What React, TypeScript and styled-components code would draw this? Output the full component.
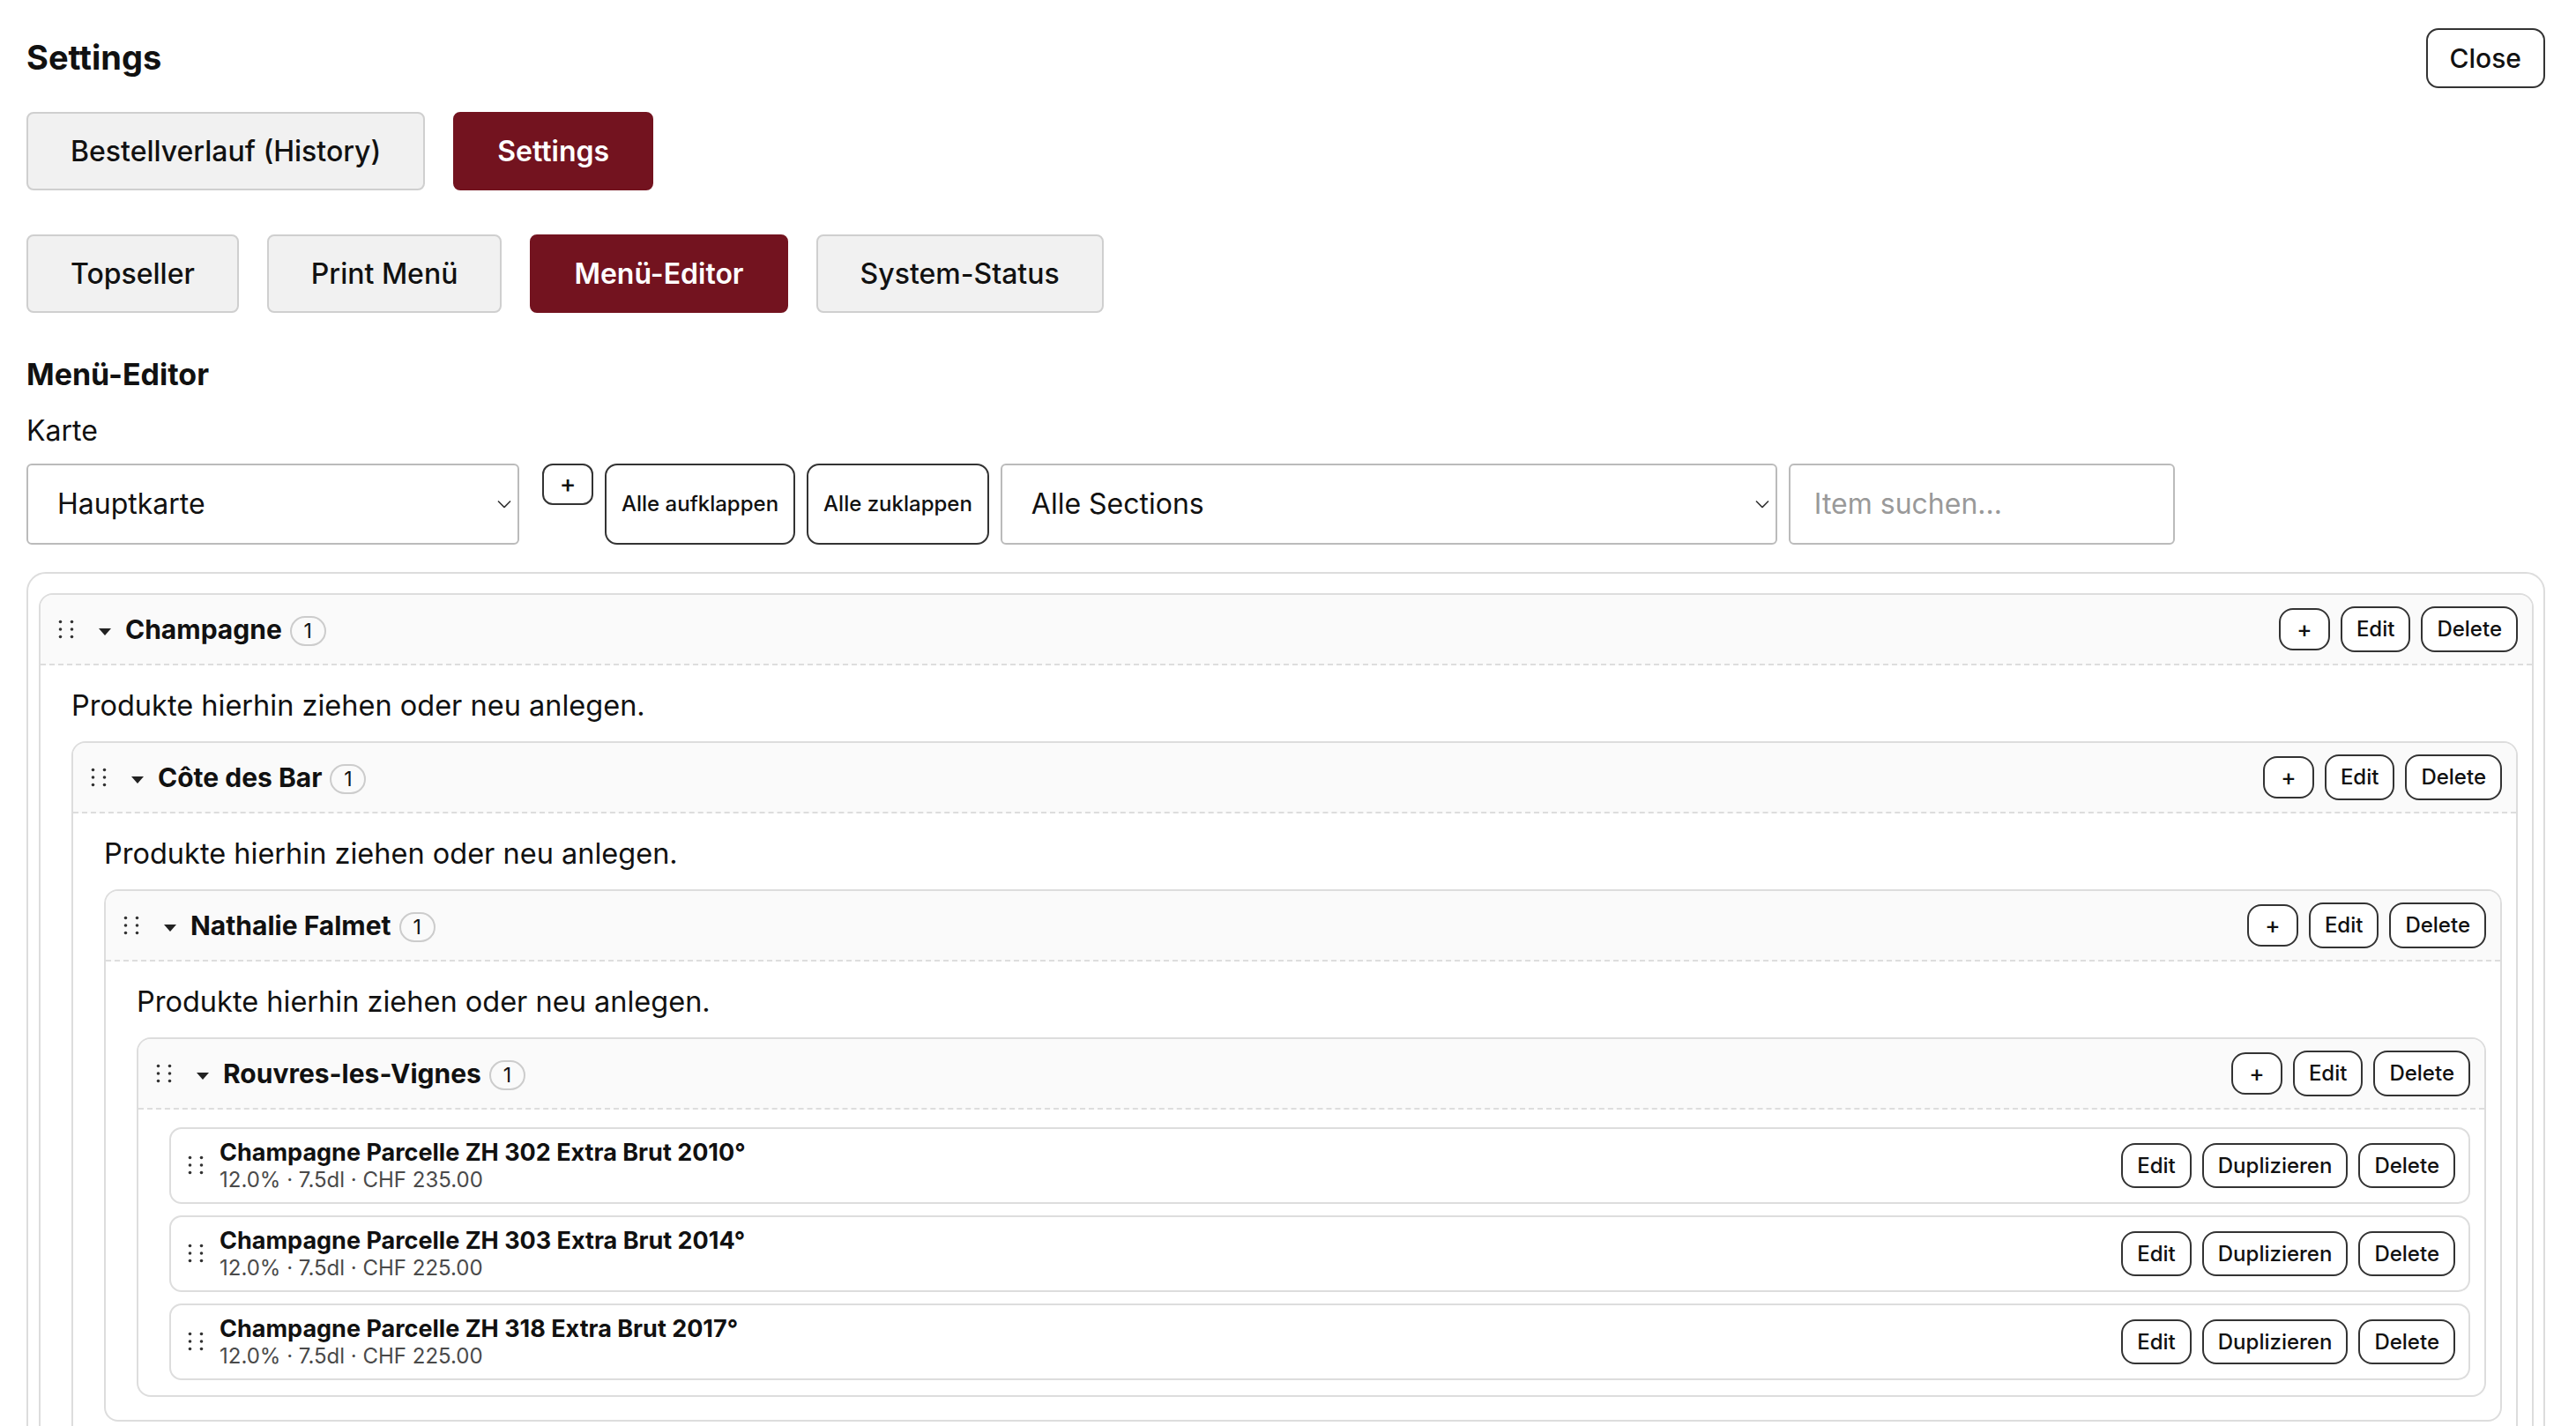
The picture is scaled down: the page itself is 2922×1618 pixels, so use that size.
import styled, { createGlobalStyle } from "styled-components";

type Product = {
  name: string;
  meta: string;
};

type Section = {
  title: string;
  count: number;
  children?: Section[];
  items?: Product[];
};

const GlobalStyle = createGlobalStyle`
  * {
    box-sizing: border-box;
  }
  html,
  body {
    margin: 0;
    padding: 0;
    overflow: hidden;
    background: #fff;
  }
  body {
    font-family: Inter, "Noto Sans", sans-serif;
    color: #111;
  }
  button,
  input,
  select {
    font-family: inherit;
    color: inherit;
  }
`;

const Page = styled.div`
  padding: 32px 35px 0 30px;
`;

const TopBar = styled.header`
  display: flex;
  justify-content: space-between;
  align-items: center;
  height: 68px;
`;

const Title = styled.h1`
  margin: 0;
  font-size: 38px;
  font-weight: 700;
  line-height: 1.2;
`;

const CloseButton = styled.button`
  height: 68px;
  padding: 0 25px;
  border: 2px solid #333;
  border-radius: 14px;
  background: #fff;
  font-size: 30px;
  font-weight: 500;
`;

const TabRow = styled.nav<{ $top: number }>`
  display: flex;
  gap: 32px;
  margin-top: ${(p) => p.$top}px;
`;

const Tab = styled.button<{ $active?: boolean }>`
  height: 89px;
  padding: 0 48px;
  border: 2px solid ${(p) => (p.$active ? "#73131f" : "#cfcfcf")};
  border-radius: 8px;
  background: ${(p) => (p.$active ? "#73131f" : "#f1f1f1")};
  color: ${(p) => (p.$active ? "#fff" : "#111")};
  font-size: 32px;
  font-weight: ${(p) => (p.$active ? 600 : 500)};
`;

const Heading = styled.h2`
  margin: 50px 0 0;
  font-size: 34px;
  font-weight: 700;
  line-height: 1.2;
`;

const FieldLabel = styled.label`
  display: block;
  margin-top: 23px;
  font-size: 32px;
  line-height: 39px;
`;

const Toolbar = styled.div`
  display: flex;
  gap: 13px;
  height: 92px;
  margin-top: 18px;
`;

const SelectWrap = styled.div<{ $width: number }>`
  position: relative;
  flex: none;
  width: ${(p) => p.$width}px;
`;

const Select = styled.select`
  appearance: none;
  width: 100%;
  height: 100%;
  padding: 0 40px 0 33px;
  border: 2px solid #bbb;
  border-radius: 6px;
  background: #fff;
  font-size: 32px;
`;

const SelectArrow = styled.svg`
  position: absolute;
  top: 50%;
  right: 9px;
  transform: translateY(-50%);
  pointer-events: none;
`;

const SmallAdd = styled.button`
  align-self: flex-start;
  width: 58px;
  height: 47px;
  margin-left: 13px;
  border: 2px solid #333;
  border-radius: 12px;
  background: #fff;
  font-size: 28px;
  font-weight: 500;
`;

const ToolButton = styled.button`
  padding: 0 17px;
  border: 2px solid #333;
  border-radius: 14px;
  background: #fff;
  font-size: 24px;
  font-weight: 500;
`;

const SearchInput = styled.input`
  width: 438px;
  padding: 0 27px;
  border: 2px solid #bbb;
  border-radius: 6px;
  font-size: 32px;

  &::placeholder {
    color: #999;
  }
`;

const ListPanel = styled.div`
  margin-top: 31px;
  padding: 22px 11px 22px 12px;
  border: 2px solid #ddd;
  border-radius: 22px;
`;

const SectionBox = styled.section`
  border: 2px solid #ddd;
  border-radius: 16px;
  background: #fff;
  overflow: hidden;
`;

const SectionHeader = styled.div`
  display: flex;
  align-items: center;
  height: 80px;
  padding: 0 16px 0 20px;
  background: #fafafa;
  border-bottom: 2px dashed #ddd;
`;

const Handle = styled.svg<{ $gap: number }>`
  flex: none;
  margin-right: ${(p) => p.$gap}px;
`;

const Caret = styled.svg`
  flex: none;
  margin: 6px 16px 0 0;
`;

const SectionTitle = styled.span`
  font-size: 30px;
  font-weight: 700;
  margin-right: 9px;
`;

const CountBadge = styled.span`
  display: inline-flex;
  align-items: center;
  justify-content: center;
  min-width: 41px;
  height: 34px;
  padding: 0 12px;
  border: 2px solid #ccc;
  border-radius: 17px;
  font-size: 23px;
  margin-top: 4px;
`;

const Actions = styled.div`
  display: flex;
  align-items: center;
  gap: 12px;
  margin-left: auto;
`;

const ActionButton = styled.button<{ $square?: boolean; $height: number }>`
  height: ${(p) => p.$height}px;
  min-width: ${(p) => (p.$square ? "58px" : "0")};
  padding: 0 16px;
  border: 2px solid #333;
  border-radius: 16px;
  background: #fff;
  font-size: ${(p) => (p.$square ? "26px" : "24px")};
  font-weight: 500;
`;

const SectionBody = styled.div<{ $compact?: boolean }>`
  display: flex;
  flex-direction: column;
  gap: ${(p) => (p.$compact ? 13 : 20)}px;
  padding: ${(p) => (p.$compact ? "20px 16px 17px 35px" : "26px 16px 26px 35px")};
`;

const DropHint = styled.p`
  margin: 0;
  font-size: 32.5px;
  line-height: 40px;
`;

const ProductRow = styled.div`
  display: flex;
  align-items: center;
  min-height: 87px;
  padding: 11px 15px 11px 19px;
  border: 2px solid #ddd;
  border-radius: 14px;
  background: #fff;
`;

const ProductInfo = styled.div`
  display: flex;
  flex-direction: column;
`;

const ProductName = styled.span`
  font-size: 27px;
  font-weight: 700;
  line-height: 32px;
`;

const ProductMeta = styled.span`
  font-size: 24px;
  line-height: 29px;
  color: #4a4a4a;
`;

const menu: Section = {
  title: "Champagne",
  count: 1,
  children: [
    {
      title: "Côte des Bar",
      count: 1,
      children: [
        {
          title: "Nathalie Falmet",
          count: 1,
          children: [
            {
              title: "Rouvres-les-Vignes",
              count: 1,
              items: [
                { name: "Champagne Parcelle ZH 302 Extra Brut 2010°", meta: "12.0% · 7.5dl · CHF 235.00" },
                { name: "Champagne Parcelle ZH 303 Extra Brut 2014°", meta: "12.0% · 7.5dl · CHF 225.00" },
                { name: "Champagne Parcelle ZH 318 Extra Brut 2017°", meta: "12.0% · 7.5dl · CHF 225.00" },
              ],
            },
          ],
        },
      ],
    },
  ],
};

function DragDots({ gap }: { gap: number }) {
  return (
    <Handle $gap={gap} width="19" height="22" viewBox="0 0 19 22">
      {[2.5, 11, 19.5].map((y) => (
        <g key={y} fill="#333">
          <circle cx="2.5" cy={y} r="1.8" />
          <circle cx="15.5" cy={y} r="1.8" />
        </g>
      ))}
    </Handle>
  );
}

function Chevron() {
  return (
    <SelectArrow width="16" height="9" viewBox="0 0 16 9">
      <path d="M1 1l7 7 7-7" fill="none" stroke="#333" strokeWidth="1.6" />
    </SelectArrow>
  );
}

function MenuSection({ section }: { section: Section }) {
  const hasItems = !!section.items && section.items.length > 0;
  return (
    <SectionBox>
      <SectionHeader>
        <DragDots gap={27} />
        <Caret width="14" height="8" viewBox="0 0 14 8">
          <path d="M0 0h14L7 8z" fill="#222" />
        </Caret>
        <SectionTitle>{section.title}</SectionTitle>
        <CountBadge>{section.count}</CountBadge>
        <Actions>
          <ActionButton $square $height={48}>
            +
          </ActionButton>
          <ActionButton $height={52}>Edit</ActionButton>
          <ActionButton $height={52}>Delete</ActionButton>
        </Actions>
      </SectionHeader>
      <SectionBody $compact={hasItems}>
        {!hasItems && <DropHint>Produkte hierhin ziehen oder neu anlegen.</DropHint>}
        {section.children?.map((child) => (
          <MenuSection key={child.title} section={child} />
        ))}
        {section.items?.map((item) => (
          <ProductRow key={item.name}>
            <DragDots gap={17} />
            <ProductInfo>
              <ProductName>{item.name}</ProductName>
              <ProductMeta>{item.meta}</ProductMeta>
            </ProductInfo>
            <Actions>
              <ActionButton $height={51}>Edit</ActionButton>
              <ActionButton $height={51}>Duplizieren</ActionButton>
              <ActionButton $height={51}>Delete</ActionButton>
            </Actions>
          </ProductRow>
        ))}
      </SectionBody>
    </SectionBox>
  );
}

export default function App() {
  return (
    <>
      <GlobalStyle />
      <Page>
        <TopBar>
          <Title>Settings</Title>
          <CloseButton>Close</CloseButton>
        </TopBar>
        <TabRow $top={27}>
          <Tab>Bestellverlauf (History)</Tab>
          <Tab $active>Settings</Tab>
        </TabRow>
        <TabRow $top={50}>
          <Tab>Topseller</Tab>
          <Tab>Print Menü</Tab>
          <Tab $active>Menü-Editor</Tab>
          <Tab>System-Status</Tab>
        </TabRow>
        <Heading>Menü-Editor</Heading>
        <FieldLabel htmlFor="karte">Karte</FieldLabel>
        <Toolbar>
          <SelectWrap $width={559}>
            <Select id="karte" defaultValue="haupt">
              <option value="haupt">Hauptkarte</option>
            </Select>
            <Chevron />
          </SelectWrap>
          <SmallAdd>+</SmallAdd>
          <ToolButton>Alle aufklappen</ToolButton>
          <ToolButton>Alle zuklappen</ToolButton>
          <SelectWrap $width={881}>
            <Select defaultValue="all">
              <option value="all">Alle Sections</option>
            </Select>
            <Chevron />
          </SelectWrap>
          <SearchInput placeholder="Item suchen..." />
        </Toolbar>
        <ListPanel>
          <MenuSection section={menu} />
        </ListPanel>
      </Page>
    </>
  );
}
